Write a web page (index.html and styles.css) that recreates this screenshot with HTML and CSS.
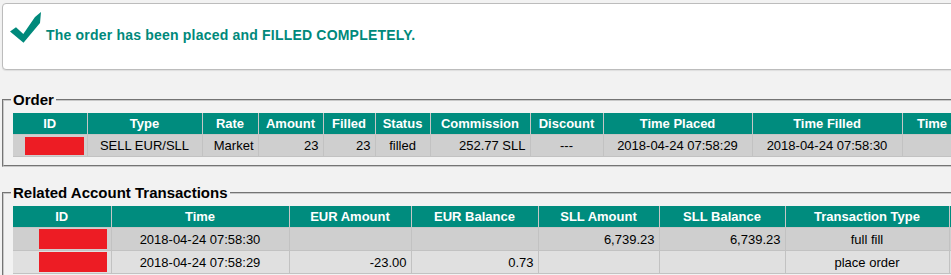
FILE: index.html
```html
<!DOCTYPE html>
<html lang="en">
<head>
    <meta charset="UTF-8">
    <title>Order Result</title>
    <link rel="stylesheet" href="styles.css">
</head>
<body>

    <div class="message">
        <svg class="check" width="32" height="32" viewBox="0 0 32 32">
            <path d="M0 20.5 L6 16.3 L13.3 23 L25 6 L31 1 L30 12 L13.5 31.7 Z" fill="#00897b"/>
        </svg>
        <span class="message-text">The order has been placed and FILLED COMPLETELY.</span>
    </div>

    <fieldset class="group">
        <legend>Order</legend>
        <table class="grid order-grid">
            <colgroup>
                <col style="width: 74px"><col style="width: 115px"><col style="width: 56px">
                <col style="width: 65px"><col style="width: 52px"><col style="width: 55px">
                <col style="width: 100px"><col style="width: 73px"><col style="width: 149px">
                <col style="width: 150px"><col style="width: 125px">
            </colgroup>
            <tr>
                <th>ID</th><th>Type</th><th>Rate</th><th>Amount</th><th>Filled</th><th>Status</th>
                <th>Commission</th><th>Discount</th><th>Time Placed</th><th>Time Filled</th><th>Time Cancelled</th>
            </tr>
            <tr class="odd">
                <td class="r"><span class="hidden-id small"></span></td>
                <td class="c">SELL EUR/SLL</td>
                <td class="r">Market</td>
                <td class="r">23</td>
                <td class="r">23</td>
                <td class="c">filled</td>
                <td class="r">252.77 SLL</td>
                <td class="c">---</td>
                <td class="c">2018-04-24 07:58:29</td>
                <td class="c">2018-04-24 07:58:30</td>
                <td></td>
            </tr>
        </table>
    </fieldset>

    <fieldset class="group">
        <legend>Related Account Transactions</legend>
        <table class="grid tx-grid">
            <colgroup>
                <col style="width: 98px"><col style="width: 178px"><col style="width: 122px">
                <col style="width: 127px"><col style="width: 121px"><col style="width: 126px">
                <col style="width: 164px"><col style="width: 80px">
            </colgroup>
            <tr>
                <th>ID</th><th>Time</th><th>EUR Amount</th><th>EUR Balance</th>
                <th>SLL Amount</th><th>SLL Balance</th><th>Transaction Type</th><th></th>
            </tr>
            <tr class="odd">
                <td class="r"><span class="hidden-id"></span></td>
                <td class="c">2018-04-24 07:58:30</td>
                <td class="r"></td>
                <td class="r"></td>
                <td class="r">6,739.23</td>
                <td class="r">6,739.23</td>
                <td class="c">full fill</td>
                <td></td>
            </tr>
            <tr class="even">
                <td class="r"><span class="hidden-id"></span></td>
                <td class="c">2018-04-24 07:58:29</td>
                <td class="r">-23.00</td>
                <td class="r">0.73</td>
                <td class="r"></td>
                <td class="r"></td>
                <td class="c">place order</td>
                <td></td>
            </tr>
        </table>
    </fieldset>

</body>
</html>
```

FILE: styles.css
```css
html { overflow: hidden; }
body { margin: 0; width: 1200px; background-color: #f2f2f2; font-family: 'Liberation Sans', Arial, sans-serif; font-size: 13px; color: #000; }

.message { display: flex; align-items: flex-start; margin: 3px 0 0 2px; padding: 7px 0 0 7px; box-sizing: border-box; height: 67px; background: #fff; border: 1px solid #bcbcbc; border-radius: 4px; box-shadow: 0 1px 1px rgba(0,0,0,0.08); }
.check { flex: none; }
.message-text { margin: 16px 0 0 4px; font-size: 14px; font-weight: bold; letter-spacing: 0.2px; color: #00897b; }

.group { margin: 21px 0 0 2px; padding: 5px 9px 8px 9px; border: 2px groove #c8c8c8; border-right: none; }
.group + .group { margin-top: 17px; }
.group legend { padding: 0 2px; margin-left: -2px; font-size: 15px; font-weight: bold; line-height: 17px; }

.grid { border-collapse: collapse; table-layout: fixed; }
.order-grid { width: 1014px; }
.tx-grid { width: 1016px; }
.grid th { height: 21px; padding: 0 4px; background-color: #008c7e; color: #fff; font-weight: bold; font-size: 13px; text-align: center; white-space: nowrap; overflow: hidden; border: 1px solid #c6c6c6; border-top: none; }
.grid td { height: 21px; padding: 0 4px; white-space: nowrap; border: 1px solid #c2c2c2; }
.tx-grid td { height: 22px; }
.grid tr:first-child th:first-child, .grid td:first-child { border-left: none; }
.grid tr.odd td { background-color: #cfcfcf; }
.grid tr.even td { background-color: #e0e0e0; }
.c { text-align: center; }
.r { text-align: right; }

.hidden-id { display: inline-block; width: 68px; height: 20px; vertical-align: middle; background-color: #ed1c24; }
.hidden-id.small { width: 59px; height: 18px; margin-right: -1px; }
```
